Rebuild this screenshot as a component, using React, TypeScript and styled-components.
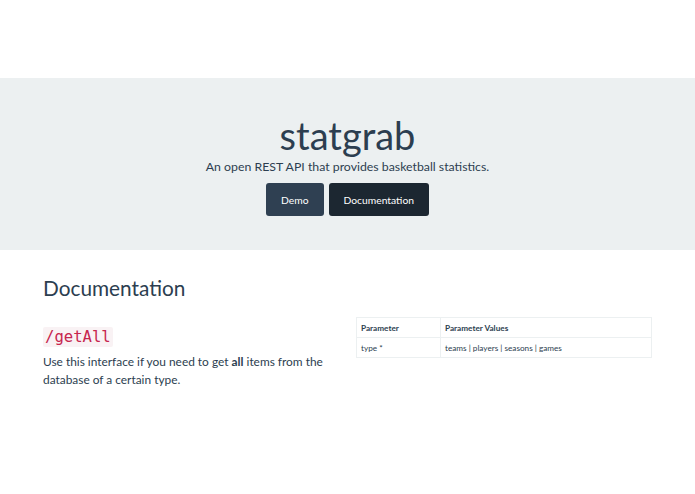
import React from "react";
import styled, { createGlobalStyle } from "styled-components";

const Global = createGlobalStyle`
  html, body { margin: 0; padding: 0; background: #fff; }
  body { font-family: Lato, "Open Sans", sans-serif; color: #2c3e50; }
`;

const Page = styled.div`
  padding-top: 78px;
`;

const Hero = styled.section`
  background: #ecf0f1;
  height: 172px;
  display: flex;
  flex-direction: column;
  align-items: center;
  padding-top: 34px;
  box-sizing: border-box;
`;

const Title = styled.h1`
  margin: 0;
  font-size: 38px;
  font-weight: 400;
  line-height: 46px;
  color: #2c3e50;
`;

const Lead = styled.p`
  margin: 0;
  font-size: 12.3px;
  line-height: 18px;
  color: #2c3e50;
`;

const Buttons = styled.div`
  display: flex;
  gap: 5px;
  margin-top: 7px;
`;

const Button = styled.a<{ $dark?: boolean }>`
  display: inline-flex;
  align-items: center;
  justify-content: center;
  height: 33px;
  padding: 0 15px;
  border-radius: 3px;
  font-size: 10.3px;
  color: #fff;
  text-decoration: none;
  background: ${(p) => (p.$dark ? "#1c2731" : "#2f4052")};
`;

const Content = styled.main`
  padding: 24px 43px 0 43px;
`;

const Heading = styled.h2`
  margin: 0;
  font-size: 20.8px;
  font-weight: 400;
  line-height: 28px;
  color: #2c3e50;
`;

const Row = styled.div`
  display: grid;
  grid-template-columns: 1fr 296px;
  gap: 14px;
  align-items: start;
  margin-top: 15px;
`;

const Endpoint = styled.code`
  display: inline-block;
  margin-top: 10px;
  font-family: "DejaVu Sans Mono", monospace;
  font-size: 15.6px;
  line-height: 20px;
  color: #c7254e;
  background: #f9f2f4;
  padding: 0 2px;
  border-radius: 2px;
`;

const Text = styled.p`
  margin: 6px 0 0;
  font-size: 11.9px;
  line-height: 18px;
  color: #2c3e50;
`;

const Table = styled.table`
  border-collapse: collapse;
  width: 100%;
  font-size: 8.2px;
  color: #2c3e50;
`;

const Th = styled.th<{ $w?: number }>`
  text-align: left;
  font-weight: 700;
  padding: 0 4px;
  height: 20px;
  box-sizing: border-box;
  border: 1px solid #ecf0f1;
  ${(p) => (p.$w ? `width: ${p.$w}px;` : "")}
`;

const Td = styled.td`
  padding: 0 4px;
  height: 20px;
  box-sizing: border-box;
  border: 1px solid #ecf0f1;
`;

export default function App() {
  return (
    <Page>
      <Global />
      <Hero>
        <Title>statgrab</Title>
        <Lead>An open REST API that provides basketball statistics.</Lead>
        <Buttons>
          <Button href="#">Demo</Button>
          <Button href="#" $dark>Documentation</Button>
        </Buttons>
      </Hero>
      <Content>
        <Heading>Documentation</Heading>
        <Row>
          <div>
            <Endpoint>/getAll</Endpoint>
            <Text>
              Use this interface if you need to get <b>all</b> items from the database of a certain type.
            </Text>
          </div>
          <Table>
            <thead>
              <tr>
                <Th $w={84}>Parameter</Th>
                <Th>Parameter Values</Th>
              </tr>
            </thead>
            <tbody>
              <tr>
                <Td>type *</Td>
                <Td>teams | players | seasons | games</Td>
              </tr>
            </tbody>
          </Table>
        </Row>
      </Content>
    </Page>
  );
}
